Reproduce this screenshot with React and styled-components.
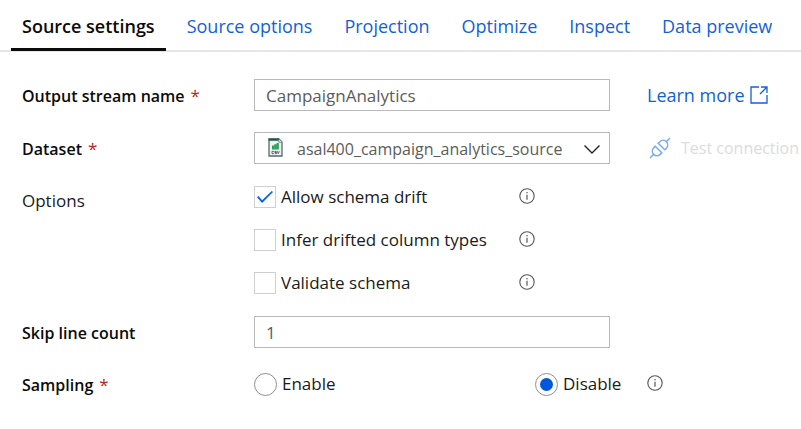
import React, { useState } from "react";
import styled, { createGlobalStyle } from "styled-components";

const GlobalStyle = createGlobalStyle`
  *, *::before, *::after { box-sizing: border-box; }
  body {
    margin: 0;
    background: #fff;
    color: #1b1a19;
    font-family: "Segoe UI", "Open Sans", "Noto Sans", sans-serif;
    font-size: 17px;
    line-height: 24px;
  }
  button, input, select { font: inherit; color: inherit; margin: 0; }
`;

const Tabs = styled.div`
  display: flex;
  gap: 10px;
  padding: 0 11px;
  border-bottom: 2px solid #e6e6e6;
`;

const Tab = styled.button`
  flex: none;
  height: 51px;
  margin-bottom: -1px;
  padding: 4px 11px 0;
  border: 0;
  border-bottom: 3px solid ${(p) => (p.$active ? "#0b0b0b" : "transparent")};
  background: none;
  font-size: 18px;
  font-weight: ${(p) => (p.$active ? 600 : 400)};
  color: ${(p) => (p.$active ? "#0b0b0b" : "#155fd6")};
  white-space: nowrap;
  cursor: pointer;
`;

const Form = styled.form`
  display: flex;
  flex-direction: column;
  gap: 21px;
  padding: 27px 0 24px 22px;
`;

const Row = styled.div`
  display: grid;
  grid-template-columns: 232px minmax(240px, 356px) minmax(150px, 1fr);
  min-height: 30px;
  align-items: ${(p) => (p.$top ? "start" : "center")};
`;

const Label = styled.label`
  font-size: ${(p) => (p.$plain ? "17px" : "16px")};
  font-weight: ${(p) => (p.$plain ? 400 : 600)};
  color: ${(p) => (p.$plain ? "#1b1a19" : "#0b0b0b")};
  padding-top: ${(p) => (p.$plain ? "4px" : "2px")};
`;

const Required = styled.span`
  margin-left: 6px;
  font-size: 17px;
  font-weight: 400;
  color: #b4262c;
`;

const TextInput = styled.input`
  width: 100%;
  height: 32px;
  padding: 0 11px;
  border: 1px solid #b9b9b9;
  border-radius: 0;
  background: #fff;
  color: #5c5c5c;
`;

const SelectBox = styled.div`
  position: relative;
`;

const Select = styled.select`
  display: block;
  width: 100%;
  height: 32px;
  padding: 2px 36px 0 42px;
  border: 1px solid #b9b9b9;
  border-radius: 0;
  background: #fff;
  color: #5c5c5c;
  font-size: 16px;
  appearance: none;
`;

const FileMark = styled.span`
  position: absolute;
  left: 14px;
  top: 6px;
  display: flex;
  pointer-events: none;
`;

const Chevron = styled.span`
  position: absolute;
  right: 9px;
  top: 12px;
  display: flex;
  pointer-events: none;
`;

const Aside = styled.div`
  display: flex;
  padding-left: 37px;
`;

const Link = styled.a`
  display: flex;
  align-items: center;
  gap: 5px;
  font-size: 18px;
  color: #155fd6;
  text-decoration: none;
  white-space: nowrap;
`;

const TestButton = styled.button`
  display: flex;
  align-items: center;
  gap: 10px;
  padding: 0 0 0 2px;
  border: 0;
  background: none;
  font-size: 16px;
  color: #dcdcdc;
  white-space: nowrap;
`;

const Options = styled.div`
  display: grid;
  gap: 19px;
`;

const OptionLine = styled.div`
  display: grid;
  grid-template-columns: minmax(0, 265px) auto;
  align-items: center;
  justify-content: start;
`;

const Choice = styled.label`
  display: flex;
  align-items: center;
  gap: 5px;
  white-space: nowrap;
`;

const Checkbox = styled.input`
  appearance: none;
  flex: none;
  width: 22px;
  height: 22px;
  display: grid;
  place-items: center;
  border: 1px solid #cfcfcf;
  background: #fff;

  &:checked::before {
    content: "";
    width: 16px;
    height: 12px;
    background: #0f5fe0;
    clip-path: polygon(0 52%, 9% 42%, 32% 78%, 92% 0, 100% 9%, 32% 100%);
  }
`;

const Radio = styled.input`
  appearance: none;
  flex: none;
  width: 23px;
  height: 23px;
  display: grid;
  place-items: center;
  border: 1px solid #8f8f8f;
  border-radius: 50%;
  background: #fff;

  &:checked::before {
    content: "";
    width: 13px;
    height: 13px;
    border-radius: 50%;
    background: #0457d8;
  }
`;

const Radios = styled.div`
  grid-column: 2 / -1;
  display: grid;
  grid-template-columns: minmax(0, 281px) auto auto;
  justify-content: start;
  align-items: center;
`;

const InfoButton = styled.button`
  display: flex;
  margin: ${(p) => (p.$apart ? "0 0 2px 26px" : "0 0 2px")};
  padding: 0;
  border: 0;
  background: none;
  color: #555;
`;

function Info({ label, apart }) {
  return (
    <InfoButton type="button" aria-label={`About ${label}`} $apart={apart}>
      <svg width="16" height="16" viewBox="0 0 16 16" fill="none" stroke="currentColor">
        <circle cx="8" cy="8" r="7.2" strokeWidth="1.1" />
        <path d="M8 6.8v5" strokeWidth="1.2" />
        <circle cx="8" cy="4.7" r=".75" fill="currentColor" stroke="none" />
      </svg>
    </InfoButton>
  );
}

function CsvIcon() {
  return (
    <svg width="15" height="19" viewBox="0 0 15 19">
      <path d="M1 1h10l3 3v14H1z" fill="#eef2f2" stroke="#59686a" strokeWidth="1.3" />
      <path d="M.5 .5h10.3l2.2 2.3H.5z" fill="#1d5c44" />
      <path d="M10.8 1v3.2H14" fill="#fff" stroke="#59686a" strokeWidth=".8" />
      <path d="M4 7.5h2.2v4H4zM6.3 6.3h2.2v5.2H6.3zM8.6 5h2.2v6.5H8.6z" fill="#27a35a" />
      <path
        d="M5.8 13.4H4v2.2h1.8M8.6 13.4H6.8v1.1h1.8v1.1H6.8M9.3 13.2l1 2.4 1-2.4"
        fill="none"
        stroke="#4b5557"
        strokeWidth=".9"
      />
    </svg>
  );
}

function ExternalIcon() {
  return (
    <svg width="18" height="18" viewBox="0 0 18 18" fill="none" stroke="currentColor" strokeWidth="1.3">
      <path d="M9 1H1v16h16V9M11 1h6v6M17 1l-7 7" />
    </svg>
  );
}

function PlugIcon() {
  return (
    <svg width="22" height="22" viewBox="0 0 22 22" fill="none" stroke="#7ba9ee" strokeWidth="1.5">
      <path d="M1 21l4-4M17 5l4-4" />
      <path d="M6.2 9.2l6.6 6.6-1.6 1.6a4.5 4.5 0 0 1-6.5-6.5z" />
      <path d="M9.2 6.2l6.6 6.6 1.6-1.6a4.5 4.5 0 0 0-6.5-6.5z" />
    </svg>
  );
}

const TABS = ["Source settings", "Source options", "Projection", "Optimize", "Inspect", "Data preview"];

const OPTIONS = [
  { id: "drift", label: "Allow schema drift", on: true },
  { id: "infer", label: "Infer drifted column types", on: false },
  { id: "validate", label: "Validate schema", on: false },
];

export default function App() {
  const [tab, setTab] = useState(TABS[0]);
  return (
    <main>
      <GlobalStyle />
      <Tabs role="tablist">
        {TABS.map((name) => (
          <Tab
            key={name}
            type="button"
            role="tab"
            aria-selected={name === tab}
            $active={name === tab}
            onClick={() => setTab(name)}
          >
            {name}
          </Tab>
        ))}
      </Tabs>
      <Form onSubmit={(e) => e.preventDefault()}>
        <Row>
          <Label htmlFor="stream">
            Output stream name<Required>*</Required>
          </Label>
          <TextInput id="stream" defaultValue="CampaignAnalytics" />
          <Aside>
            <Link href="#learn-more">
              Learn more
              <ExternalIcon />
            </Link>
          </Aside>
        </Row>
        <Row>
          <Label htmlFor="dataset">
            Dataset<Required>*</Required>
          </Label>
          <SelectBox>
            <Select id="dataset">
              <option>asal400_campaign_analytics_source</option>
            </Select>
            <FileMark>
              <CsvIcon />
            </FileMark>
            <Chevron>
              <svg width="18" height="11" viewBox="0 0 18 11" fill="none" stroke="#222" strokeWidth="1.4">
                <path d="M1.5 1.5L9 9l7.5-7.5" />
              </svg>
            </Chevron>
          </SelectBox>
          <Aside>
            <TestButton type="button" disabled>
              <PlugIcon />
              Test connection
            </TestButton>
          </Aside>
        </Row>
        <Row $top>
          <Label as="span" id="options-label" $plain>
            Options
          </Label>
          <Options role="group" aria-labelledby="options-label">
            {OPTIONS.map((o) => (
              <OptionLine key={o.id}>
                <Choice>
                  <Checkbox type="checkbox" defaultChecked={o.on} />
                  {o.label}
                </Choice>
                <Info label={o.label} />
              </OptionLine>
            ))}
          </Options>
        </Row>
        <Row>
          <Label htmlFor="skip">Skip line count</Label>
          <TextInput id="skip" defaultValue="1" />
        </Row>
        <Row>
          <Label as="span" id="sampling-label">
            Sampling<Required>*</Required>
          </Label>
          <Radios role="radiogroup" aria-labelledby="sampling-label">
            <Choice>
              <Radio type="radio" name="sampling" value="enable" />
              Enable
            </Choice>
            <Choice>
              <Radio type="radio" name="sampling" value="disable" defaultChecked />
              Disable
            </Choice>
            <Info label="Sampling" apart />
          </Radios>
        </Row>
      </Form>
    </main>
  );
}
